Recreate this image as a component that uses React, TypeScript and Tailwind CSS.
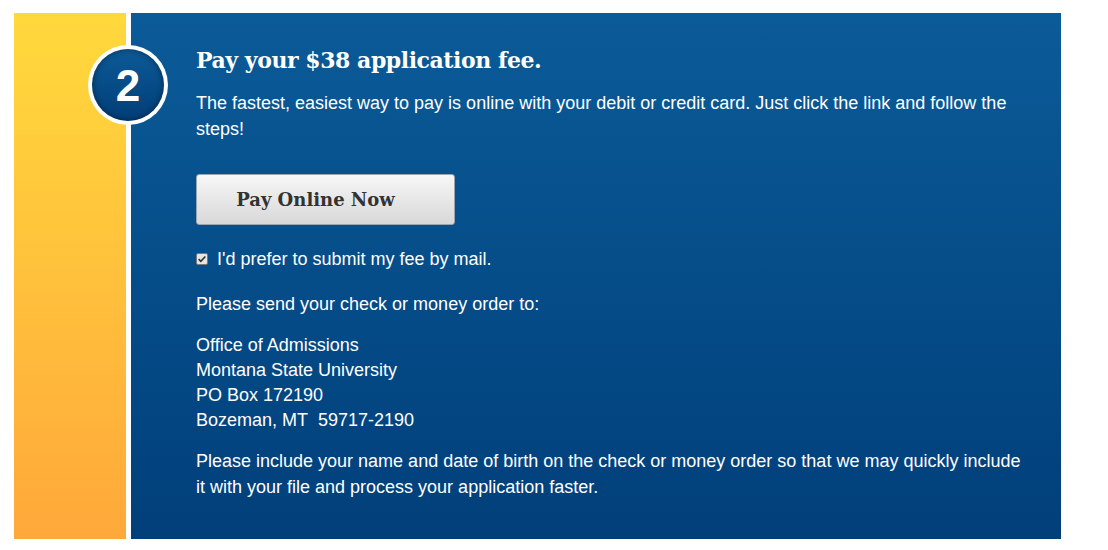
const App = () => {
  return (
    <div className="w-[1108px] h-[550px] bg-white overflow-hidden font-['Liberation_Sans',Arial,sans-serif]">
      <div className="relative flex pt-[13px] pl-[14px] gap-[5px]">
        {/* Yellow side strip */}
        <div className="w-[112px] h-[526px] bg-gradient-to-b from-[#ffd93c] to-[#ffa83a]" />

        {/* Step badge */}
        <div className="absolute left-[88px] top-[45px] w-[80px] h-[80px] rounded-full bg-white p-[4px]">
          <div className="w-full h-full rounded-full bg-gradient-to-b from-[#0d5a97] to-[#023e78] shadow-[inset_0_0_6px_rgba(0,0,0,0.45)] flex items-center justify-center">
            <span className="text-white font-bold text-[44px] leading-none mt-[2px]">2</span>
          </div>
        </div>

        {/* Content panel */}
        <div className="w-[930px] h-[526px] bg-gradient-to-b from-[#0b5b98] to-[#013f7a] text-white pl-[65px] pr-[30px] pt-[32px] text-[18px]">
          <h2 className="font-['DejaVu_Serif',serif] font-bold text-[22px] leading-[30px] tracking-[-0.45px]">
            Pay your $38 application fee.
          </h2>
          <p className="mt-[15px] leading-[26px]">
            The fastest, easiest way to pay is online with your debit or credit card. Just click the link and follow the
            steps!
          </p>

          <button className="mt-[32px] w-[259px] h-[51px] rounded-[3px] border border-[#9aa5b0] bg-gradient-to-b from-[#f7f7f7] to-[#d8d8d8] text-[#333] font-['DejaVu_Serif',serif] font-bold text-[18px] pr-[20px]">
            Pay Online Now
          </button>

          <label className="mt-[24px] flex items-center gap-[9px] leading-[20px]">
            <span className="w-[12px] h-[12px] rounded-[2px] border border-[#7a7a7a] bg-[#e6e6e6] flex items-center justify-center">
              <svg viewBox="0 0 12 12" className="w-[10px] h-[10px]">
                <path d="M2 6.2 L4.6 8.8 L10 3" fill="none" stroke="#333" strokeWidth="2" />
              </svg>
            </span>
            I'd prefer to submit my fee by mail.
          </label>

          <p className="mt-[23px] leading-[25px]">Please send your check or money order to:</p>

          <p className="mt-[16px] leading-[25px]">
            Office of Admissions
            <br />
            Montana State University
            <br />
            PO Box 172190
            <br />
            Bozeman, MT&nbsp;&nbsp;59717-2190
          </p>

          <p className="mt-[15px] leading-[26px]">
            Please include your name and date of birth on the check or money order so that we may quickly include
            it with your file and process your application faster.
          </p>
        </div>
      </div>
    </div>
  );
};

export default App;
